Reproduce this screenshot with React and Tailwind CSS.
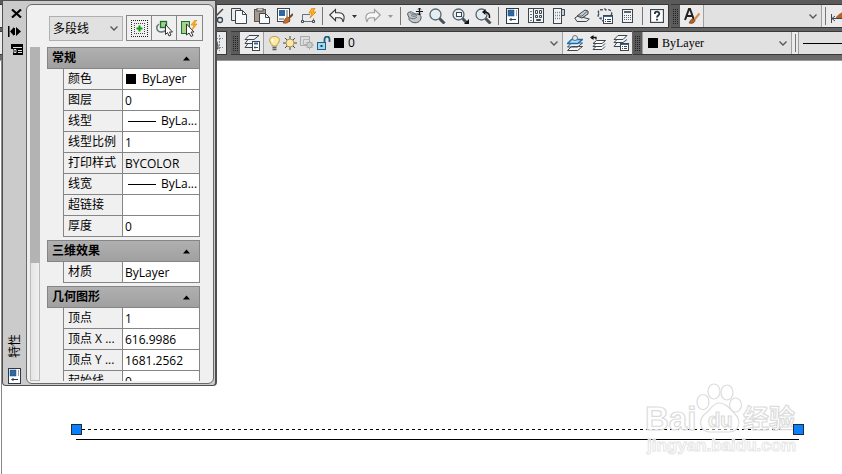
import { useState } from 'react'

const INK = '#3c4650'

const Icon = ({ w = 16, h = 16, children }) => (
  <svg width={w} height={h} viewBox={`0 0 ${w} ${h}`} fill="none" className="shrink-0" aria-hidden="true">
    {children}
  </svg>
)

const CutIcon = () => (
  <Icon>
    <path d="M15 1 7 9M1 1l8 9" stroke={INK} strokeWidth="1.5" />
    <circle cx="12" cy="12" r="2.5" stroke={INK} strokeWidth="1.3" />
    <circle cx="3" cy="13" r="2" stroke={INK} strokeWidth="1.3" />
  </Icon>
)

const CopyIcon = () => (
  <Icon>
    <path d="M4.500 12.500h-4v-12h9v2" stroke={INK} />
    <path d="M4.500 2.500h7l4 4v9h-11z" fill="#fafafa" stroke={INK} />
    <path d="M11.500 2.500v4h4" stroke={INK} />
  </Icon>
)

const PasteIcon = () => (
  <Icon>
    <rect x="0.500" y="1.500" width="11" height="12" fill="#a89a88" stroke="#5d554c" />
    <rect x="3" y="0" width="6" height="3" fill="#d8d8d8" stroke="#555" />
    <path d="M5.500 5.500h6l4 4v6h-10z" fill="#fafafa" stroke={INK} />
    <path d="M11.500 5.500v4h4" stroke={INK} />
  </Icon>
)

const MatchIcon = () => (
  <Icon>
    <rect x="0.500" y="0.500" width="12" height="13" fill="#fff" stroke={INK} />
    <rect x="2" y="2" width="6" height="6" fill="#2f67a3" />
    <path d="M10 2v7M2 11h5" stroke="#8a949c" strokeWidth="1.500" />
    <path d="M6 15c1-1 1-5 5-6l2 2c0 3-3 5-7 4z" fill="#c46a28" stroke="#8a4514" strokeWidth="0.600" />
    <path d="m12 10 4-4" stroke="#7a4b25" strokeWidth="2" />
  </Icon>
)

const BlockEditIcon = () => (
  <Icon>
    <path d="M10 6.500H2.500v7h11v-3" stroke="#69727a" />
    <path d="M1.500 12.500h2v2h-2zM12.500 12.500h2v2h-2z" fill="#eee" stroke={INK} />
    <path d="M12 0 9 5h3l-2 5 6-6h-3l2-4z" fill="#ffb420" stroke="#e07a00" strokeWidth="0.700" />
  </Icon>
)

const ArrowIcon = ({ flip, color }) => (
  <Icon>
    <path
      d="M.8 7 6.500 1.500v3.200h3.500c4.500 0 6.500 3.800 4 9.300-.2-3.200-1.500-4.300-4-4.300H6.500v3z"
      transform={flip ? 'translate(16 0) scale(-1 1)' : undefined}
      fill="#f7f7f7"
      stroke={color}
      strokeWidth="1.100"
    />
  </Icon>
)

const PanIcon = () => (
  <Icon>
    <path d="M.8 5c1.200-2 3 0 4 1l5 0c3 0 5 2 4 5-1 4-7 5-10.500 2-1-1-2-2-1-3L.8 7z" fill="#c3c8cc" stroke="#4c545b" />
    <path d="M3 3.500c2 0 4 2 6 3M3 10c2 1 5 1 7-1M4 7.500c2 1 4 1 6 0" stroke="#69727a" />
    <path d="M12.500 0v7M9 3.500h7" stroke="#111" strokeWidth="1.200" />
    <path d="m11 1.500 1.500-1.500L14 1.500M11 5.500 12.500 7 14 5.500" stroke="#111" />
  </Icon>
)

const ZoomIcon = ({ kind }) => (
  <Icon w={17}>
    <circle cx="6.500" cy="6.500" r="5.500" fill="#e3eef2" stroke="#59656e" strokeWidth="1.300" />
    <path d="m10.500 10.500 5 5" stroke="#4a5159" strokeWidth="3" />
    {kind === 'window' && (
      <>
        <rect x="4.500" y="4.500" width="5" height="4" fill="#fff" stroke={INK} />
        <path d="M17 11v5h-5z" fill="#111" />
      </>
    )}
    {kind === 'previous' && (
      <>
        <path d="M9 4c4 0 6 2 5.500 6" stroke="#111" strokeWidth="1.600" />
        <path d="M10.500 1v6L7 4z" fill="#111" />
      </>
    )}
  </Icon>
)

const PropertiesIcon = () => (
  <Icon w={13}>
    <rect x="0.500" y="0.500" width="12" height="15" fill="#fff" stroke="#2c3947" />
    <rect x="2" y="2" width="6" height="6" fill="#2f67a3" stroke="#214a78" strokeWidth="0.500" />
    <path d="M10.500 2v6" stroke="#97a0a8" />
    <path d="M3.500 11.500H10M5.500 10 4 11.500 5.500 13" stroke="#2c3947" />
  </Icon>
)

const DesignCenterIcon = () => (
  <Icon>
    <rect x="0.500" y="0.500" width="15" height="14" fill="#f4f4f4" stroke={INK} />
    <path d="M5.500.5v14" stroke={INK} />
    <path d="M2 3.500h2M2 6.500h2M2 9.500h2M2 12.500h2" stroke="#6c7680" />
    <path d="M7.500 2.500h2v3h-2zM11.500 2.500h2v3h-2zM7.500 7.500h2v2h-2zM11.500 7.500h2v2h-2zM8.500 11.500h4v1h-4z" stroke={INK} />
  </Icon>
)

const ToolPalettesIcon = () => (
  <Icon w={12}>
    <path d="M8.500 1.500h3v6h-3" fill="#ccc" stroke={INK} />
    <rect x="0.500" y="0.500" width="8" height="15" fill="#f4f4f4" stroke={INK} />
    <path d="M2 4.500h6M2 7.500h6M2 10.500h6" stroke="#7c868e" strokeDasharray="1 1" strokeWidth="1.500" />
  </Icon>
)

const SheetSetIcon = () => (
  <Icon>
    <path d="m.8 10 3-2 11.500 3-3 2.500H3z" fill="#ececec" stroke={INK} />
    <path d="m3 8 8-6 3 1v3l-6 4z" fill="#c9ced2" stroke={INK} />
    <path d="m4 8 4 0 5-4.500" stroke="#59656e" />
  </Icon>
)

const MarkupIcon = () => (
  <Icon>
    <path d="M2 5.500C0 3 3 1 5 2c1-2 4-1 4 0 2-1 5 0 5 2 1 1 1 2 0 3M2 6c-2 2 0 5 2 4 0 2 1 3 3 3" stroke={INK} strokeDasharray="3 1.500" strokeWidth="1.300" />
    <rect x="6.500" y="7.500" width="9" height="8" fill="#fff" stroke={INK} />
    <path d="M6.500 8.500h9" stroke="#2f67a3" />
    <path d="M8 11.500h1M10 11.500h4M8 13.500h1M10 13.500h4" stroke={INK} />
  </Icon>
)

const CalculatorIcon = () => (
  <Icon w={12}>
    <rect x="0.500" y="1.500" width="10" height="13" fill="#f4f4f4" stroke={INK} />
    <rect x="2" y="3" width="7" height="2" fill="#59656e" />
    <path d="M2 7.500h7M2 9.500h7M2 11.500h7" stroke="#59656e" strokeDasharray="1 1" />
  </Icon>
)

const HelpIcon = () => (
  <Icon w={14} h={14}>
    <rect x="0.500" y="0.500" width="13" height="13" fill="#fff" stroke={INK} strokeWidth="1.300" />
    <path d="M4.800 5c0-3 4.500-3 4.500-.3C9.300 6.500 7 6.500 7 8.500M7 9.800v1.700" stroke="#29323a" strokeWidth="1.800" />
  </Icon>
)

const TextStyleIcon = () => (
  <Icon>
    <path d="m1 12 4-11h1l4 11M3 8h5" stroke="#222" strokeWidth="2" />
    <path d="M5 15c1-1 1-4 4-4l2 1c0 3-3 4-6 3z" fill="#b5622a" stroke="#70370f" strokeWidth="0.600" />
    <path d="m10.500 11.500 5-6" stroke="#d98b4a" strokeWidth="2" />
  </Icon>
)

const DimStyleIcon = () => (
  <Icon>
    <path d="M.5 6v9M1 10.500h15M4 8l-3 2.500L4 13" stroke={INK} />
    <path d="M5 9c2-1 2-3 5-4l6-4v9H5z" fill="#b5622a" />
  </Icon>
)

const SnapIcon = () => (
  <Icon>
    <path d="M3.500 0v16M12.500 0v16M0 3.500h16M0 12.500h16" stroke="#7d8994" strokeDasharray="2 1" />
    <path d="M2 6c5-4 8-2 9 5v3H2z" fill="#9ba5ae" stroke={INK} />
  </Icon>
)

const LayerManagerIcon = () => (
  <Icon>
    <path d="M5 .5 1 4.500h9l5-4zM4 4.500l-3 4h7M4 8.500l-3 4h7" fill="#f4f4f4" stroke={INK} />
    <rect x="8.500" y="6.500" width="7" height="9" fill="#fff" stroke={INK} />
    <path d="M10 8.500h4" stroke="#2f67a3" strokeWidth="2" />
    <path d="M10 12.500h4M11 11.500v2" stroke={INK} />
  </Icon>
)

const MakeCurrentIcon = () => (
  <Icon>
    <path d="M4.500 11.500.5 15.500h10l5-4zM4.500 8l-4 4h10l5-4z" fill="#f4f4f4" stroke={INK} />
    <path d="m4.500 4.500-4 4h10l5-4z" fill="#b8def4" stroke="#176fb5" strokeWidth="1.300" />
    <circle cx="8" cy="3" r="2.500" fill="#e8e8e8" stroke="#6c7680" />
  </Icon>
)

const LayerPreviousIcon = () => (
  <Icon>
    <path d="M6.500 5.500 3 8.500h9l3.500-3zM6 8.500l-3 3h9l3-3M6 11.500l-3 3h9l3-3" fill="#fff" stroke={INK} />
    <path d="M1 2.500h5v2" stroke="#111" strokeWidth="1.300" />
    <path d="M3.500 0v5L0 2.500z" fill="#111" />
  </Icon>
)

const LayerStatesIcon = () => (
  <Icon>
    <path d="M5 .5 1 4.500h9l4-4zM4 4.500l-3 3h9l4-3M4 7.500l-3 4h6" fill="#f4f4f4" stroke={INK} />
    <rect x="7.500" y="8.500" width="8" height="7" fill="#fff" stroke={INK} />
    <path d="M7.500 9.500h8" stroke="#2f67a3" />
    <path d="M9 11.500h1M11 11.500h3M9 13.500h1M11 13.500h3" stroke={INK} />
  </Icon>
)

const BulbIcon = () => (
  <Icon w={11} h={15}>
    <path d="M5.500.5c-6 0-6 5-2.500 8v1.500h5V8.500c3.500-3 3.500-8-2.500-8z" fill="#ffe9a0" stroke="#b99a4e" />
    <path d="M3.500 11.500h4M3.500 13.500h4" stroke="#59656e" strokeWidth="1.500" />
    <path d="M4 3c-1 1-1 2 0 3" stroke="#fff" strokeWidth="1.500" />
  </Icon>
)

const SunIcon = () => (
  <Icon w={14} h={14}>
    <path d="M7 0v14M0 7h14M2 2l10 10M12 2 2 12" stroke="#4b4b40" />
    <circle cx="7" cy="7" r="4" fill="#ffe9a0" stroke="#a8925a" />
  </Icon>
)

const FreezeIcon = () => (
  <Icon w={14} h={14}>
    <path d="M.5.500h9v9h-9z" fill="#ddd" stroke="#a9a9a9" />
    <path d="M3.500 3.500h6v5h-6z" stroke="#b4b4b4" />
    <path d="M9.500 4.500v9M5 9h9M6.500 6l6 6M12.500 6l-6 6" stroke="#aaa" />
    <circle cx="9.500" cy="9" r="2.800" fill="#ccc" stroke="#a4a4a4" />
  </Icon>
)

const LockIcon = () => (
  <Icon w={14} h={15}>
    <path d="M7.500 7V3.500c0-4 5-4 5 0V6" stroke="#1f5f83" strokeWidth="1.800" />
    <rect x="0.500" y="6.500" width="8" height="7" fill="#9edbf2" stroke="#1f5f83" />
    <path d="M4.500 9v2" stroke="#123f5b" strokeWidth="2" />
  </Icon>
)

const PickAddIcon = () => (
  <Icon w={17} h={17}>
    <path d="M0 .5h17M0 16.500h17M.5 0v17M16.500 0v17" stroke="#222" strokeDasharray="1 1" />
    <path d="M3 3.500h11M3 13.500h11M3.500 3v11M13.500 3v11" stroke="#444" strokeDasharray="1 1" />
    <path d="M8.500 5.500v6M5.500 8.500h6" stroke="#0a9a0a" strokeWidth="2" />
  </Icon>
)

const SelectObjectsIcon = () => (
  <Icon w={17} h={17}>
    <path d="M3 4c-4 3-2 8 2 8s5-2 5-4" stroke="#68747d" strokeWidth="1.500" />
    <rect x="4.500" y="1.500" width="6" height="6" fill="#a9d08b" stroke="#197330" strokeWidth="1.300" />
    <path d="M9.500 4.500v10l2-2 1.500 3.500 2-1-1.500-3h3z" fill="#fff" stroke="#333" />
  </Icon>
)

const QuickSelectIcon = () => (
  <Icon w={17} h={17}>
    <rect x="0.500" y="1.500" width="8" height="12" fill="#a9d08b" stroke="#197330" />
    <path d="m5.500 4v11l2.500-2 2 3.500 2-1-2-3.500h3z" fill="#fff" stroke="#333" />
    <path d="m14 0-4 5h3l-2 5 5-6h-3l3-4z" fill="#ffb420" stroke="#e07a00" strokeWidth="0.600" />
  </Icon>
)

const Chevron = () => (
  <svg width="8" height="5" viewBox="0 0 8 5" fill="none" className="pointer-events-none mr-1 shrink-0" aria-hidden="true">
    <path d="M.5.500 4 4 7.500.5" stroke="#555" strokeWidth="1.300" />
  </svg>
)

const ToolButton = ({ label, children }) => (
  <button type="button" aria-label={label} className="flex h-full w-[23px] shrink-0 items-center justify-center">
    {children}
  </button>
)

const CaretButton = ({ label, color }) => (
  <button type="button" aria-label={label} className="flex h-full w-[13px] shrink-0 items-center justify-center">
    <svg width="5" height="3" viewBox="0 0 5 3" aria-hidden="true"><path d="M0 0h5L2.500 3z" fill={color} /></svg>
  </button>
)

const Separator = () => (
  <div className="flex w-[6px] shrink-0 justify-center py-[2px]">
    <div className="w-px bg-[#777]" />
  </div>
)

const Grip = () => (
  <div className="flex w-[9px] shrink-0 items-center justify-center bg-[#5c5c5c]">
    <svg width="5" height="15" viewBox="0 0 5 15" aria-hidden="true">
      <path d="M.5 0v15M2.500 0v15M4.500 0v15" stroke="#222" strokeDasharray="1 1" />
    </svg>
  </div>
)

const Swatch = () => <span className="size-[10px] shrink-0 bg-black" />

// Drop-down with optional icons in front of the value
const Combo = ({ label, value, className, before }) => (
  <div className={`flex items-center border-l border-[#a0a0a0] bg-[#e1e1e1] ${className}`}>
    {before}
    <select aria-label={label} className="h-full min-w-0 flex-1 appearance-none bg-transparent px-1 outline-none">
      <option>{value}</option>
    </select>
    <Chevron />
  </div>
)

const StandardToolbar = () => (
  <div className="flex h-6">
    <div className="flex shrink-0 border-y border-r border-[#383838] bg-[#ebebeb] pl-[204px]">
      <ToolButton label="剪切"><CutIcon /></ToolButton>
      <ToolButton label="复制"><CopyIcon /></ToolButton>
      <ToolButton label="粘贴"><PasteIcon /></ToolButton>
      <ToolButton label="特性匹配"><MatchIcon /></ToolButton>
      <ToolButton label="块编辑器"><BlockEditIcon /></ToolButton>
      <Separator />
      <ToolButton label="放弃"><ArrowIcon color="#30383f" /></ToolButton>
      <CaretButton label="放弃列表" color="#333" />
      <ToolButton label="重做"><ArrowIcon flip color="#9a9a9a" /></ToolButton>
      <CaretButton label="重做列表" color="#999" />
      <Separator />
      <ToolButton label="实时平移"><PanIcon /></ToolButton>
      <ToolButton label="实时缩放"><ZoomIcon /></ToolButton>
      <ToolButton label="窗口缩放"><ZoomIcon kind="window" /></ToolButton>
      <ToolButton label="缩放上一个"><ZoomIcon kind="previous" /></ToolButton>
      <Separator />
      <ToolButton label="特性"><PropertiesIcon /></ToolButton>
      <ToolButton label="设计中心"><DesignCenterIcon /></ToolButton>
      <ToolButton label="工具选项板"><ToolPalettesIcon /></ToolButton>
      <ToolButton label="图纸集管理器"><SheetSetIcon /></ToolButton>
      <ToolButton label="标记集管理器"><MarkupIcon /></ToolButton>
      <ToolButton label="快速计算器"><CalculatorIcon /></ToolButton>
      <Separator />
      <ToolButton label="帮助"><HelpIcon /></ToolButton>
    </div>
    <div className="ml-[2px] flex min-w-0 flex-1 overflow-hidden border-y border-[#383838] bg-[#ebebeb]">
      <Grip />
      <ToolButton label="文字样式"><TextStyleIcon /></ToolButton>
      <Combo label="文字样式控制" value="" className="w-[119px] shrink-0 border-r" />
      <Separator />
      <button type="button" aria-label="标注样式" className="flex shrink-0 items-center pl-[3px]"><DimStyleIcon /></button>
    </div>
  </div>
)

const LayerToolbar = () => (
  <div className="flex h-6">
    <div className="flex shrink-0 border-y border-r border-[#383838] bg-[#ebebeb] pl-[203px]">
      <ToolButton label="捕捉"><SnapIcon /></ToolButton>
    </div>
    <div className="ml-1 flex shrink-0 border-y border-[#383838] bg-[#ebebeb]">
      <Grip />
      <ToolButton label="图层特性管理器"><LayerManagerIcon /></ToolButton>
      <Combo
        label="图层控制"
        value="0"
        className="w-[300px] border-r font-['Open_Sans',sans-serif] text-xs"
        before={
          <div className="flex items-center gap-[3px] pl-[5px]">
            <BulbIcon />
            <SunIcon />
            <FreezeIcon />
            <LockIcon />
            <Swatch />
          </div>
        }
      />
      <ToolButton label="置为当前"><MakeCurrentIcon /></ToolButton>
      <ToolButton label="上一个图层"><LayerPreviousIcon /></ToolButton>
      <ToolButton label="图层状态管理器"><LayerStatesIcon /></ToolButton>
    </div>
    <div className="ml-px flex min-w-0 flex-1 overflow-hidden border-y border-[#383838] bg-[#ebebeb]">
      <Grip />
      <Combo
        label="颜色控制"
        value="ByLayer"
        className="w-[150px] shrink-0 border-r pl-[5px] font-['Liberation_Serif',serif] text-xs"
        before={<Swatch />}
      />
      <Separator />
      <button type="button" aria-label="线型控制" className="flex min-w-0 flex-1 items-center border-l border-[#a0a0a0] bg-[#e1e1e1] pl-1">
        <span className="h-px w-full bg-black" />
      </button>
    </div>
  </div>
)

const SECTIONS = [
  {
    title: '常规',
    rows: [
      { name: '颜色', value: 'ByLayer', kind: 'swatch' },
      { name: '图层', value: '0' },
      { name: '线型', value: 'ByLa...', kind: 'line' },
      { name: '线型比例', value: '1' },
      { name: '打印样式', value: 'BYCOLOR', kind: 'readonly' },
      { name: '线宽', value: 'ByLa...', kind: 'line' },
      { name: '超链接', value: '' },
      { name: '厚度', value: '0' }
    ]
  },
  {
    title: '三维效果',
    rows: [{ name: '材质', value: 'ByLayer' }]
  },
  {
    title: '几何图形',
    rows: [
      { name: '顶点', value: '1' },
      { name: '顶点 X ...', value: '616.9986' },
      { name: '顶点 Y ...', value: '1681.2562' },
      { name: '起始线', value: '0' }
    ]
  }
]

const PropertyValue = ({ id, row }) => {
  if (row.kind === 'swatch') {
    return <span className="flex items-center gap-[6px] pl-[3px]"><Swatch />{row.value}</span>
  }
  if (row.kind === 'line') {
    return (
      <span className="flex items-center gap-[5px] pl-[5px]">
        <span className="h-px w-7 shrink-0 bg-black" />
        {row.value}
      </span>
    )
  }
  return (
    <input
      id={id}
      type="text"
      defaultValue={row.value}
      readOnly={row.kind === 'readonly'}
      className="block h-5 w-full bg-transparent pl-[2px] outline-none"
    />
  )
}

const PropertySection = ({ index, title, rows }) => {
  const [open, setOpen] = useState(true)

  return (
    <section>
      <button
        type="button"
        aria-expanded={open}
        onClick={() => setOpen(!open)}
        className="flex h-[22px] w-full items-center justify-between border border-[#858585] bg-linear-to-b from-[#b0b0b0] to-[#a0a0a0] pr-2 pl-1 font-bold"
      >
        {title}
        <svg width="9" height="5" viewBox="0 0 9 5" aria-hidden="true"><path d="M1 4.500h7L4.500.5z" fill="#000" /></svg>
      </button>
      {open && (
        <div className="pl-4">
          <table className="w-full table-fixed border-separate border-spacing-0">
            <tbody>
              {rows.map((row, i) => {
                const id = `prop-${index}-${i}`
                const hasInput = row.kind !== 'swatch' && row.kind !== 'line'
                return (
                  <tr key={row.name} className="h-[21px]">
                    <th scope="row" className="w-[59px] border-b border-l border-[#858585] p-0 pl-1 text-left font-normal whitespace-nowrap">
                      {hasInput ? <label htmlFor={id}>{row.name}</label> : row.name}
                    </th>
                    <td className={`border-x border-b border-[#858585] p-0 whitespace-nowrap ${row.kind === 'readonly' ? 'bg-[#f0f0f0]' : 'bg-white'}`}>
                      <PropertyValue id={id} row={row} />
                    </td>
                  </tr>
                )
              })}
            </tbody>
          </table>
        </div>
      )}
    </section>
  )
}

const PropertiesPalette = () => (
  <aside className="absolute top-0 left-[2px] flex h-[386px] w-[215px] rounded-b-sm border border-r-2 border-[#505050] bg-[#cbcbcb] pt-[3px] pr-px pb-px font-['Open_Sans','Noto_Sans_CJK_SC',sans-serif] text-xs leading-4 text-black">
    <div className="flex w-[23px] shrink-0 flex-col items-center">
      <button type="button" aria-label="关闭" className="flex h-[18px] items-center pl-1">
        <svg width="11" height="9" viewBox="0 0 11 9" aria-hidden="true"><path d="M1 .5 10 8.500M10 .5 1 8.500" stroke="#000" strokeWidth="2.200" /></svg>
      </button>
      <button type="button" aria-label="自动隐藏" className="flex h-[18px] items-center">
        <svg width="13" height="11" viewBox="0 0 13 11" aria-hidden="true">
          <path d="M0 0h1.500v11H0zM6 1v9L2 5.500zM8 1v9l5-4.500z" />
          <path d="M6.500 2v7" stroke="#000" />
        </svg>
      </button>
      <button type="button" aria-label="选项" className="flex h-[19px] items-center pl-1">
        <svg width="12" height="11" viewBox="0 0 12 11" aria-hidden="true">
          <path d="M0 0h12v11H2V5H0z" />
          <path d="M2 3.500h9M7 6.500h4M7 8.500h4M3 5.500h2v3H3z" fill="none" stroke="#ddd" />
        </svg>
      </button>
      <h2 className="mt-auto mb-[10px] rotate-180 [text-orientation:sideways] [writing-mode:vertical-rl]">特性</h2>
      <PropertiesIcon />
    </div>

    <div className="flex min-w-0 flex-1 flex-col rounded-md border border-[#6a6a6a] bg-[#f0f0f0] pb-[2px]">
      <div className="flex h-[42px] shrink-0 items-end gap-[3px] pr-[10px] pb-[6px] pl-[22px]">
        <div className="flex h-[25px] w-[74px] shrink-0 items-center border border-[#b0b0b0] bg-[#e1e1e1]">
          <select aria-label="对象类型" className="h-full min-w-0 flex-1 appearance-none bg-transparent pl-[3px] outline-none">
            <option>多段线</option>
          </select>
          <Chevron />
        </div>
        <div className="flex h-[26px] shrink-0 divide-x divide-[#858585] border border-[#858585]">
          <button type="button" aria-label="切换 PICKADD" className="flex w-[25px] items-center justify-center"><PickAddIcon /></button>
          <button type="button" aria-label="选择对象" className="flex w-[25px] items-center justify-center"><SelectObjectsIcon /></button>
          <button type="button" aria-label="快速选择" className="flex w-[25px] items-center justify-center"><QuickSelectIcon /></button>
        </div>
      </div>
      <div className="flex min-h-0 flex-1">
        <div className="ml-[3px] w-[10px] shrink-0 border border-[#bbb] bg-linear-to-r from-[#e4e4e4] to-[#f0f0f0]">
          <div className="-mx-px -mt-px h-[216px] bg-[#b3b3b3]" />
        </div>
        <div className="ml-[7px] flex w-[153px] flex-col gap-[3px] overflow-hidden">
          {SECTIONS.map((s, i) => <PropertySection key={s.title} index={i} {...s} />)}
        </div>
      </div>
    </div>
  </aside>
)

const Drawing = () => (
  <svg className="absolute inset-0 h-full w-full" role="img" aria-label="多段线">
    <path d="M74 378.500h723" stroke="#000" />
    <path d="M80 368.500h713" stroke="#000" strokeDasharray="3 3" />

    {/* Watermark */}
    <g fill="#fff" fillOpacity="0.500" stroke="#dcdcdc" strokeWidth="1.200" fontFamily="Liberation Sans, sans-serif" fontWeight="bold">
      <ellipse cx="701" cy="341" rx="6" ry="7.500" />
      <ellipse cx="712" cy="330.500" rx="6" ry="7.500" />
      <ellipse cx="725" cy="331.500" rx="6" ry="7.500" />
      <ellipse cx="733.500" cy="344" rx="6" ry="7" />
      <path d="M717 342c-6 0-8 6-13 10-8 6-7 18 3 19h20c10 0 13-11 6-18-5-5-9-11-16-11z" />
      <text x="643" y="369" fontSize="33">Bai</text>
      <text x="706" y="366" fontSize="20">du</text>
      <text x="741" y="367" fontSize="26" fontFamily="Noto Sans CJK SC, sans-serif">经验</text>
      <text x="645" y="390" fontSize="17" strokeWidth="1" stroke="#e6e6e6">jingyan.baidu.com</text>
    </g>

    <g fill="#0a80ff" stroke="#1d2b3a">
      <rect x="69.500" y="363.500" width="10" height="10" />
      <rect x="791.500" y="363.500" width="10" height="10" />
    </g>
  </svg>
)

const App = () => (
  <div className="relative flex min-h-screen flex-col overflow-hidden bg-white">
    <header className="flex flex-col gap-[3px] border-b border-[#999] bg-[#696969] bg-linear-to-b from-[#5a5a5a] to-[#6c6c6c] pt-1 pb-[5px]">
      <StandardToolbar />
      <LayerToolbar />
    </header>
    <main className="relative ml-px flex-1 border-l border-[#888]">
      <Drawing />
    </main>
    <PropertiesPalette />
  </div>
)

export default App
